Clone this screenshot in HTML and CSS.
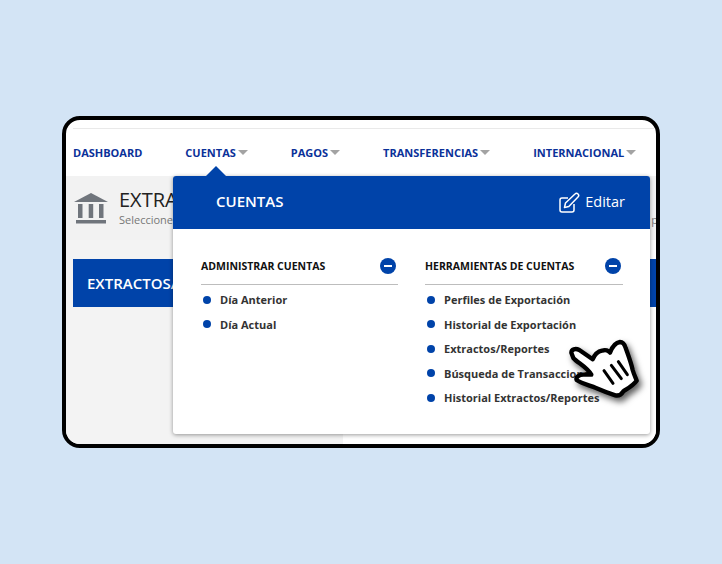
FILE: index.html
```html
<!DOCTYPE html>
<html lang="es">
<head>
  <meta charset="UTF-8" />
  <meta name="viewport" content="width=device-width, initial-scale=1" />
  <title>Cuentas</title>
  <link rel="stylesheet" href="styles.css">
</head>
<body>
  <div class="frame">
    <nav class="nav">
      <a class="nav-link">DASHBOARD</a>
      <a class="nav-link caret">CUENTAS</a>
      <a class="nav-link caret">PAGOS</a>
      <a class="nav-link caret">TRANSFERENCIAS</a>
      <a class="nav-link caret">INTERNACIONAL</a>
    </nav>

    <div class="page-head">
      <svg class="bank" viewBox="0 0 36 32" aria-hidden="true">
        <path d="M1 10 L18 1 L35 10 Z" />
        <rect x="5" y="12" width="4.5" height="14" />
        <rect x="15.7" y="12" width="4.5" height="14" />
        <rect x="26" y="12" width="4.5" height="14" />
        <rect x="3" y="28" width="30" height="3.5" />
      </svg>
      <div class="page-text">
        <div class="page-title">EXTRACTOS/REPORTES</div>
        <div class="page-sub"><span>Seleccione</span><span>p</span></div>
      </div>
    </div>

    <div class="content">
      <div class="content-bar">EXTRACTOS/REPORTES</div>
    </div>

    <div class="menu">
      <div class="menu-head">
        <span class="menu-title">CUENTAS</span>
        <span class="menu-edit">
          <svg class="edit-icon" viewBox="0 0 21 21" aria-hidden="true">
            <path d="M9 6 H3 a2 2 0 0 0 -2 2 V18 a2 2 0 0 0 2 2 H13 a2 2 0 0 0 2 -2 V12" />
            <path d="M5.5 15.5 L6.5 11 L16 2 a2 2 0 0 1 3 3 L9.8 14.5 Z" />
          </svg>
          <span class="edit-label">Editar</span>
        </span>
      </div>
      <div class="menu-body">
        <div class="menu-col">
          <div class="col-head">
            <span>ADMINISTRAR CUENTAS</span>
            <span class="minus"></span>
          </div>
          <ul class="col-list">
            <li>Día Anterior</li>
            <li>Día Actual</li>
          </ul>
        </div>
        <div class="menu-col">
          <div class="col-head">
            <span>HERRAMIENTAS DE CUENTAS</span>
            <span class="minus"></span>
          </div>
          <ul class="col-list">
            <li>Perfiles de Exportación</li>
            <li>Historial de Exportación</li>
            <li>Extractos/Reportes</li>
            <li>Búsqueda de Transacciones</li>
            <li>Historial Extractos/Reportes</li>
          </ul>
        </div>
      </div>
    </div>

    <svg class="hand" viewBox="0 0 390 405" aria-hidden="true">
      <path class="hand-shape" d="M94 98 C94 88 106 84 118 90 L158 118 C164 104 174 94 186 92 C196 88 206 92 210 98 C216 82 226 68 240 66 C250 66 254 74 257 84 C264 104 274 130 278 150 C282 164 288 176 290 182 C280 196 262 206 250 214 C244 224 236 228 226 226 C208 220 186 212 168 204 C148 196 124 190 110 180 C106 172 118 164 130 164 L154 164 C140 140 112 128 100 114 Z" />
      <path class="hand-line" d="M192 152 L219 190 M214 136 L244 176 M235 125 L262 164" />
    </svg>
  </div>
</body>
</html>
```

FILE: styles.css
```css
body {
  margin: 0;
  padding: 116px 0 0 62px;
  height: 564px;
  box-sizing: border-box;
  overflow: hidden;
  background-color: #d3e4f5;
  font-family: "Open Sans", Arial, sans-serif;
}
.frame {
  position: relative;
  box-sizing: border-box;
  width: 598px;
  height: 332px;
  display: flex;
  flex-direction: column;
  background: white;
  border: 4px solid #000;
  border-radius: 18px;
  overflow: hidden;
}
.nav {
  display: flex;
  align-items: center;
  gap: 43px;
  height: 47px;
  margin: 8px 0 0 7px;
  border-top: 1px solid #e9e9e9;
}
.nav-link {
  display: flex;
  align-items: center;
  color: #0b3199;
  font-size: 11px;
  font-weight: 700;
  white-space: nowrap;
}
.caret::after {
  content: "";
  margin-left: 2px;
  border-left: 5px solid transparent;
  border-right: 5px solid transparent;
  border-top: 5px solid #a3a3a3;
}
.page-head {
  display: flex;
  align-items: center;
  gap: 10px;
  height: 64px;
  padding-left: 7px;
  background: #f2f2f2;
  white-space: nowrap;
}
.bank {
  flex: none;
  width: 36px;
  height: 32px;
  margin-top: -1px;
  fill: #70757c;
}
.page-text {
  flex: none;
  margin-top: -3px;
}
.page-title {
  color: #222;
  font-size: 20px;
  line-height: 25px;
}
.page-sub {
  display: flex;
  justify-content: space-between;
  width: 539px;
  color: #777;
  font-size: 11px;
  line-height: 15px;
}
.content {
  flex: 1;
  padding: 19px 0 0 7px;
  background: linear-gradient(to right, #f3f3f3 277px, white 277px);
}
.content-bar {
  height: 48px;
  padding-left: 14px;
  background: #0043a9;
  color: white;
  font-size: 15px;
  font-weight: 600;
  line-height: 48px;
}
.menu {
  position: absolute;
  left: 107px;
  top: 56px;
  box-sizing: border-box;
  width: 477px;
  height: 258px;
  background: white;
  border-radius: 3px;
  box-shadow: 0 1px 4px #00000066;
}
.menu::before {
  content: "";
  position: absolute;
  left: 33px;
  top: -10px;
  border-left: 10px solid transparent;
  border-right: 10px solid transparent;
  border-bottom: 10px solid #0043a9;
}
.menu-head {
  display: flex;
  align-items: center;
  justify-content: space-between;
  height: 53px;
  padding: 0 25px 0 43px;
  background: #0043a9;
  border-radius: 3px 3px 0 0;
  color: white;
}
.menu-title {
  margin-top: -3px;
  font-size: 15px;
  font-weight: 600;
}
.menu-edit {
  display: flex;
  align-items: center;
  gap: 5px;
  font-size: 14.5px;
}
.edit-label {
  margin-top: -3px;
}
.edit-icon {
  width: 21px;
  height: 21px;
  fill: none;
  stroke: white;
  stroke-width: 1.5;
  stroke-linejoin: round;
}
.menu-body {
  display: flex;
  gap: 27px;
  padding: 27px 0 0 28px;
}
.menu-col {
  width: 197px;
}
.menu-col + .menu-col {
  width: 198px;
}
.col-head {
  display: flex;
  align-items: center;
  justify-content: space-between;
  height: 20px;
  padding: 0 2px 8px 0;
  border-bottom: 1px solid #bdbdbd;
  color: #111;
  font-size: 10.5px;
  font-weight: 700;
}
.minus {
  position: relative;
  width: 16px;
  height: 16px;
  border-radius: 50%;
  background: #0043a9;
}
.minus::after {
  content: "";
  position: absolute;
  left: 4px;
  top: 7px;
  width: 8px;
  height: 2px;
  background: white;
}
.col-list {
  margin: 2.5px 0 0;
  padding: 0;
  list-style: none;
}
.col-list li {
  display: flex;
  align-items: center;
  height: 24.5px;
  color: #333;
  font-size: 11px;
  font-weight: 700;
  white-space: nowrap;
}
.col-list li::before {
  content: "";
  width: 8px;
  height: 8px;
  margin: 0 9px 0 2px;
  border-radius: 50%;
  background: #0043a9;
}
.hand {
  position: absolute;
  left: 474px;
  top: 200px;
  width: 130px;
  height: 135px;
  filter: drop-shadow(3px 4px 3px #000000a0);
}
.hand-shape {
  fill: white;
  stroke: black;
  stroke-width: 13;
  stroke-linejoin: round;
}
.hand-line {
  fill: none;
  stroke: black;
  stroke-width: 9;
  stroke-linecap: round;
}
```
